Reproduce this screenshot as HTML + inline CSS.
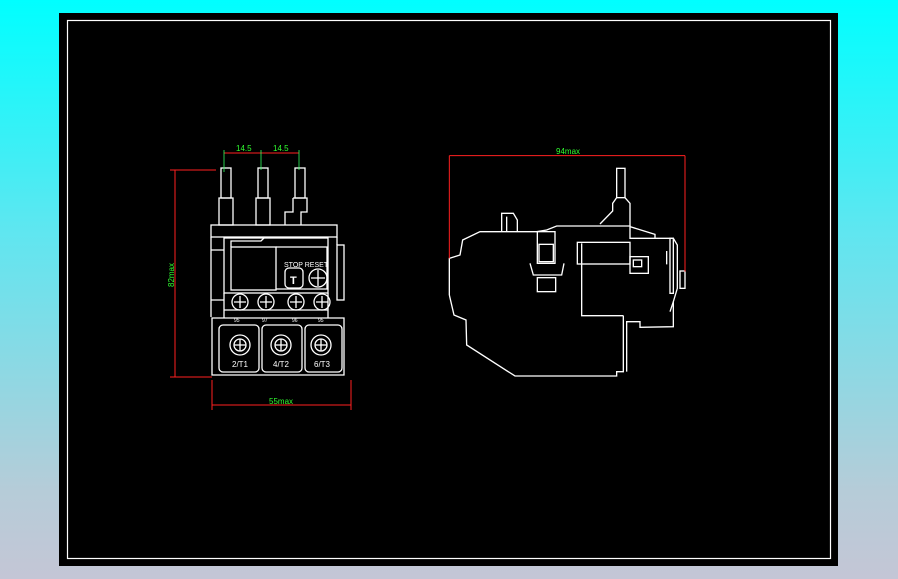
<!DOCTYPE html>
<html><head><meta charset="utf-8"><style>
html,body{margin:0;padding:0;width:898px;height:579px;overflow:hidden;background:linear-gradient(#00ffff 0%,#5fe6f0 40%,#b6ccd8 85%,#c4c6d6 100%);}
svg{position:absolute;left:0;top:0}
text{font-family:"Liberation Sans",sans-serif;}
</style></head><body>
<svg width="898" height="579" viewBox="0 0 898 579">
<rect x="59" y="13" width="779" height="553" fill="#000"/>
<rect x="67.5" y="20.5" width="763" height="538" fill="none" stroke="#fff" stroke-width="1.2"/>

<!-- FRONT VIEW -->
<g fill="none" stroke="#fff" stroke-width="1.3">
<rect x="221" y="168" width="10" height="30"/><rect x="258" y="168" width="10" height="30"/><rect x="295" y="168" width="10" height="30"/>
<path d="M219 198 h14 v27 h-14z M256 198 h14 v27 h-14z M293 198 h14 v14 h-6 v13 M293 198 v14 h-8 v13"/>
<rect x="211" y="225" width="126" height="12"/>
<path d="M211 237 v80 M337 237 v8 M211 250 h13 M211 300 h13"/>
<rect x="337" y="245" width="7" height="55"/>
<rect x="224" y="238" width="104" height="55"/>
<rect x="231" y="247" width="45" height="43"/>
<path d="M276 247 h51 v42 h-51 M231 247 v-6 h30 l3 -3"/>
<rect x="285" y="268" width="18" height="20" rx="4"/>
<circle cx="318" cy="278" r="9"/><path d="M318 270 v16 M311 278 h14"/>
<path d="M224 293 v25 M328 293 v25 M224 310 h104"/>
<circle cx="240" cy="302" r="8"/><circle cx="266" cy="302" r="8"/><circle cx="296" cy="302" r="8"/><circle cx="322" cy="302" r="8"/>
<path d="M240 296 v12 M234 302 h12 M266 296 v12 M260 302 h12 M296 296 v12 M290 302 h12 M322 296 v12 M316 302 h12"/>
<path d="M212 318 h132 v57 h-132z"/>
<rect x="219" y="325" width="40" height="47" rx="4"/><rect x="262" y="325" width="40" height="47" rx="4"/><rect x="305" y="325" width="37" height="47" rx="4"/>
<circle cx="240" cy="345" r="10"/><circle cx="281" cy="345" r="10"/><circle cx="321" cy="345" r="10"/>
<circle cx="240" cy="345" r="6"/><circle cx="281" cy="345" r="6"/><circle cx="321" cy="345" r="6"/>
<path d="M240 339 v12 M234 345 h12 M281 339 v12 M275 345 h12 M321 339 v12 M315 345 h12"/>
</g>
<g fill="#fff" font-size="8">
<text x="284" y="267" font-size="7">STOP RESET</text>
<text x="290" y="284" font-size="11" font-weight="bold">T</text>
<text x="232" y="367" font-size="8">2/T1</text><text x="273" y="367" font-size="8">4/T2</text><text x="314" y="367" font-size="8">6/T3</text>
<text x="234" y="322" font-size="5">95</text><text x="262" y="322" font-size="5">97</text><text x="292" y="322" font-size="5">96</text><text x="318" y="322" font-size="5">95</text>
</g>
<g stroke="#ff2020" stroke-width="1" fill="none">
<path d="M224 153 H299 M175 170 V377 M212 405 H351 M170 170 H216 M170 377 H212 M212 380 V410 M351 380 V410"/>
</g>
<g stroke="#30ff60" stroke-width="0.8"><path d="M224 150 V172 M261 150 V170 M299 150 V170"/></g>
<g fill="#30ff30" font-size="8">
<text x="236" y="151">14.5</text><text x="273" y="151">14.5</text>
<text x="269" y="404">55max</text>
<text transform="translate(174,287) rotate(-90)">82max</text>
<text x="556" y="154">94max</text>
</g>

<!-- SIDE VIEW -->
<g transform="translate(440,145) scale(0.33333)" fill="none" stroke="#fff" stroke-width="4">
<path d="M28 450 L28 340 L60 330 L68 285 L120 260 L290 260 L320 255 L350 243 L570 243 L570 280 L700 280 L712 300 L712 430 L700 470 L700 545 L600 547 L600 530 L560 530 L560 680"/>
<path d="M28 450 L42 510 L78 525 L80 600 L225 693 L530 693 L530 680 L550 680 L550 512"/>
<path d="M425 295 V512 H550"/>
<rect x="412" y="292" width="158" height="65"/>
<rect x="530" y="70" width="25" height="88"/>
<path d="M530 158 L518 175 L518 198 L480 237 M555 158 L570 175 L570 243"/>
<path d="M185 258 V205 H220 L232 225 V258 M200 215 V258"/>
<rect x="292" y="260" width="53" height="95"/><rect x="297" y="298" width="43" height="52"/>
<path d="M270 355 L280 390 H365 L372 355"/>
<rect x="292" y="398" width="55" height="42"/>
<path d="M570 245 L645 268 V280"/>
<rect x="690" y="280" width="10" height="165"/>
<rect x="720" y="378" width="15" height="52"/>
<rect x="570" y="335" width="55" height="50"/><rect x="580" y="345" width="25" height="20"/>
<path d="M680 318 V358 M700 470 L690 500"/>
</g>
<g transform="translate(440,145) scale(0.33333)" fill="none" stroke="#ff2020" stroke-width="3">
<path d="M28 32 H735 M28 32 V340 M735 32 V380"/>
</g>
</svg>
</body></html>
